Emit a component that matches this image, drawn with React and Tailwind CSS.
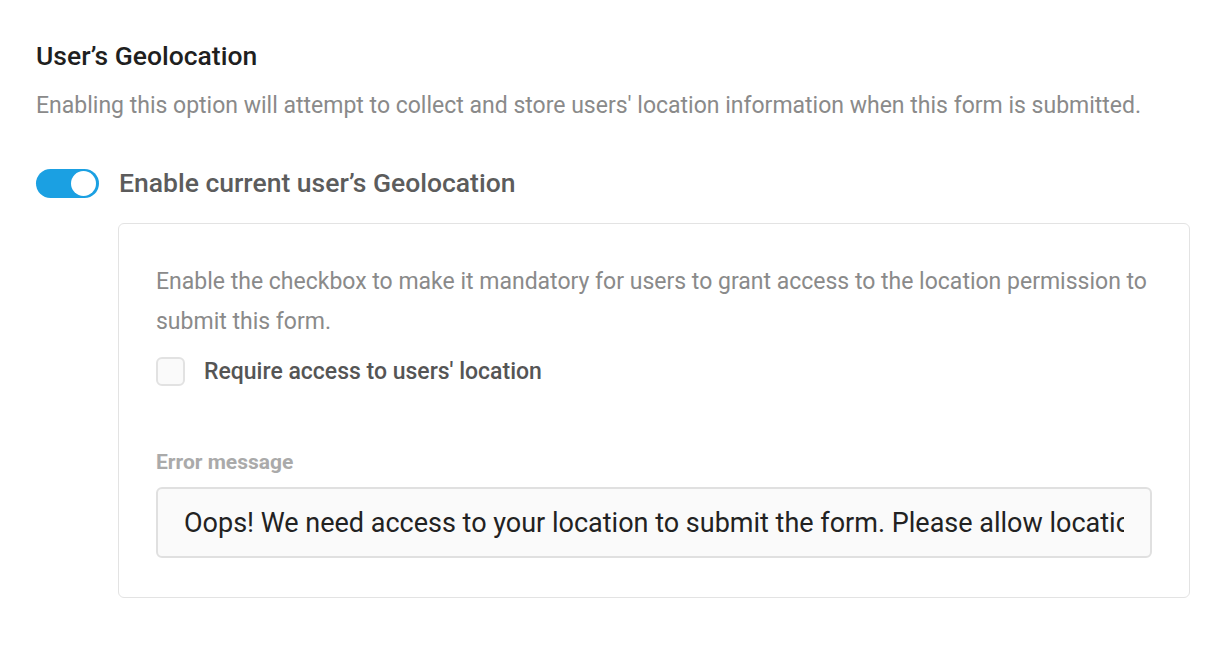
const App = () => {
  return (
    <div className="min-h-screen bg-white" style={{ fontFamily: "Roboto, 'Liberation Sans', sans-serif" }}>
      <div className="pl-9 pr-8 pt-[38px]">
        <h2 className="text-[26.5px] font-medium leading-9 text-[#1f1f1f]">User’s Geolocation</h2>
        <p className="mt-[18px] text-[23px] leading-7 text-[#8a8a8a]">
          Enabling this option will attempt to collect and store users' location information when this form is submitted.
        </p>

        <div className="mt-[45px] flex items-center gap-5">
          <button className="relative h-[29px] w-[63px] rounded-full bg-[#1ba0e2]">
            <span className="absolute right-[3px] top-[2px] h-[25px] w-[25px] rounded-full bg-white" />
          </button>
          <span className="text-[26.5px] font-medium leading-9 text-[#5c5c5c]">Enable current user’s Geolocation</span>
        </div>

        <div className="ml-[82px] mt-[22px] w-[1072px] rounded-md border border-[#e3e3e3] px-[37px] pb-[39px] pt-[38px]">
          <p className="text-[23px] leading-10 text-[#8a8a8a]">
            Enable the checkbox to make it mandatory for users to grant access to the location permission to submit this form.
          </p>
          <label className="mt-[15px] flex items-center gap-[19px]">
            <span className="h-[29px] w-[29px] rounded-md border-2 border-[#e2e2e2] bg-[#fafafa]" />
            <span className="text-[23px] font-medium leading-[29px] text-[#555]">Require access to users' location</span>
          </label>

          <div className="mt-[62px] text-[21px] font-bold leading-7 text-[#aaa]">Error message</div>
          <input
            readOnly
            value="Oops! We need access to your location to submit the form. Please allow location access to continue."
            className="mt-[11px] block h-[71px] w-full rounded-md border-2 border-[#e0e0e0] bg-[#fafafa] px-[26px] text-[27px] text-[#222] outline-none"
            style={{ fontFamily: "Roboto, 'Liberation Sans', sans-serif" }}
          />
        </div>
      </div>
    </div>
  );
};

export default App;
